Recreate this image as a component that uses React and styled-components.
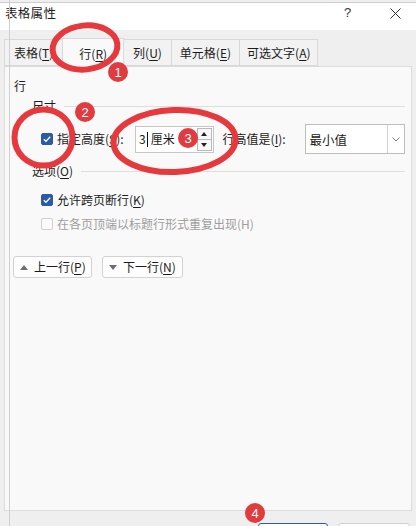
import React from "react";
import styled, { createGlobalStyle } from "styled-components";

const GlobalStyle = createGlobalStyle`
  html, body { margin: 0; padding: 0; }
  body {
    width: 416px; height: 526px; overflow: hidden;
    background: #efefef;
    font-family: "Noto Sans CJK SC", "Noto Sans", sans-serif;
    font-size: 12px; color: #1b1b1b;
  }
  u { text-decoration-thickness: 1px; text-underline-offset: 2px; }
`;

const Window = styled.div`
  position: relative;
  width: 416px; height: 526px; overflow: hidden;
  display: flex; flex-direction: column;
  background: #efefef;
`;

const TitleBar = styled.div`
  flex: none;
  margin-top: 2px;
  height: 25px;
  border-top: 1px solid #cdcdcd;
  background: #fff;
  display: flex; align-items: flex-start;
  padding: 2px 0 0 5px;
  line-height: 16px;
  font-size: 12.5px;
`;

const TitleText = styled.div`
  flex: 1;
  letter-spacing: 0.3px;
`;

const HelpMark = styled.div`
  width: 12px; margin-right: 34px;
  font-family: "Liberation Sans", sans-serif;
  font-size: 13px; color: #333;
`;

const CloseIcon = styled.svg`
  margin: 3px 15px 0 0;
`;

const Body = styled.div`
  flex: none;
  padding: 9px 4px 0 4px;
  display: flex; flex-direction: column;
`;

const TabStrip = styled.div`
  display: flex; align-items: flex-end;
  height: 27px;
  position: relative; z-index: 1;
`;

const Tab = styled.div`
  box-sizing: border-box;
  height: ${p => (p.$active ? "29px" : "27px")};
  padding: 0 ${p => p.$pad}px;
  margin: 0 -1px ${p => (p.$active ? "-1px" : "0")} 0;
  border: 1px solid #d8d8d8;
  border-bottom: ${p => (p.$active ? "none" : "1px solid #d8d8d8")};
  background: ${p => (p.$active ? "#f9f9f9" : "#f2f2f2")};
  display: flex; align-items: center;
  white-space: nowrap;
  position: relative;
  z-index: ${p => (p.$active ? 2 : 1)};
`;

const Panel = styled.div`
  box-sizing: border-box;
  height: 445px;
  border: 1px solid #dcdcdc;
  background: #f9f9f9;
  padding: 11px 6px 0 9px;
  display: flex; flex-direction: column;
`;

const Label = styled.div`
  line-height: 16px;
  white-space: nowrap;
  color: ${p => (p.$disabled ? "#9d9d9d" : "#1b1b1b")};
`;

const GroupHeader = styled.div`
  display: flex; align-items: center;
  margin: ${p => p.$mt}px 0 0 18px;
  line-height: 16px;
  &::after {
    content: "";
    flex: 1;
    height: 1px;
    background: #dedede;
    margin-left: 8px;
  }
`;

const SizeRow = styled.div`
  display: flex; align-items: center;
  margin: 11px 0 0 27px;
  height: 28px;
`;

const CheckRow = styled.div`
  display: flex; align-items: center;
  margin: ${p => p.$mt}px 0 0 27px;
  height: 16px;
`;

const Box = styled.div`
  box-sizing: border-box;
  width: 12px; height: 12px;
  border-radius: 2px;
  margin-right: 4px;
  flex: none;
  display: flex; align-items: center; justify-content: center;
  background: ${p => (p.$checked ? "#2b5aa6" : "#fbfbfb")};
  border: 1px solid ${p => (p.$checked ? "#2b5aa6" : "#cfcfcf")};
`;

const FieldLabel = styled(Label)`
  width: ${p => p.$w}px;
  margin-left: ${p => p.$ml || 0}px;
  flex: none;
`;

const SpinInput = styled.div`
  box-sizing: border-box;
  width: 82px; height: 27px;
  border: 1px solid #c6c6c6;
  background: #fff;
  display: flex; align-items: center;
  padding: 0 1px 0 3px;
`;

const InputText = styled.div`
  flex: 1;
  line-height: 16px;
  display: flex; align-items: center;
`;

const Caret = styled.span`
  display: inline-block;
  width: 1px; height: 15px;
  background: #111;
  margin: 0 3px 0 1px;
`;

const Spinner = styled.div`
  width: 15px; height: 23px;
  display: flex; flex-direction: column;
  border: 1px solid #b9b9b9;
  box-sizing: border-box;
`;

const SpinButton = styled.div`
  flex: 1;
  display: flex; align-items: center; justify-content: center;
  background: #f7f7f7;
  & + & { border-top: 1px solid #b9b9b9; }
`;

const Select = styled.div`
  box-sizing: border-box;
  width: 105px; height: 30px;
  margin-left: 9px;
  border: 1px solid #bdbdbd;
  background: #fff;
  display: flex; align-items: stretch;
`;

const SelectValue = styled.div`
  flex: 1;
  display: flex; align-items: center;
  padding-left: 4px;
  font-size: 12.5px;
`;

const SelectArrow = styled.div`
  width: 16px;
  border-left: 1px solid #d4d4d4;
  display: flex; align-items: center; justify-content: center;
`;

const NavRow = styled.div`
  display: flex; gap: 10px;
  margin: 24px 0 0 -1px;
`;

const NavButton = styled.div`
  box-sizing: border-box;
  width: ${p => p.$w}px; height: 22px;
  border: 1px solid #d2d2d2;
  border-radius: 3px;
  background: #fdfdfd;
  display: flex; align-items: center;
  padding-left: 6px;
  gap: 6px;
  white-space: nowrap;
  line-height: 16px;
  & > svg { flex: none; }
`;

const Footer = styled.div`
  flex: none;
  display: flex;
  padding: 12px 0 0 258px;
  gap: 10px;
`;

const DialogButton = styled.div`
  box-sizing: border-box;
  width: ${p => p.$w}px; height: 24px;
  border-radius: 3px;
  border: 1px solid ${p => (p.$primary ? "#2a5f9e" : "#d0d0d0")};
  background: #fdfdfd;
`;

const EdgeLine = styled.div`
  position: absolute;
  left: 9px; top: 0; bottom: 0;
  width: 1px;
  background: #cfcfcf;
  pointer-events: none;
  z-index: 5;
`;

const Annotations = styled.svg`
  position: absolute;
  left: 0; top: 0;
  pointer-events: none;
  z-index: 10;
`;

const Check = () => (
  <svg width="10" height="10" viewBox="0 0 10 10">
    <polyline points="1.8,5.2 4,7.3 8.2,2.8" fill="none" stroke="#fff" strokeWidth="1.3" />
  </svg>
);

const Tri = ({ up, color = "#6e6e6e", w = 8, h = 5 }) => (
  <svg width={w} height={h} viewBox={`0 0 ${w} ${h}`}>
    <polygon points={up ? `0,${h} ${w / 2},0 ${w},${h}` : `0,0 ${w / 2},${h} ${w},0`} fill={color} />
  </svg>
);

const Badge = ({ x, y, n }) => (
  <g>
    <circle cx={x} cy={y} r="10" fill="#e03b3e" />
    <text
      x={x} y={y + 4.5}
      textAnchor="middle"
      fontSize="13"
      fontFamily="Liberation Sans, Arial, sans-serif"
      fill="#fff"
    >{n}</text>
  </g>
);

export default function App() {
  return (
    <>
      <GlobalStyle />
      <Window>
        <TitleBar>
          <TitleText>表格属性</TitleText>
          <HelpMark>?</HelpMark>
          <CloseIcon width="11" height="11" viewBox="0 0 11 11">
            <path d="M0.5 0.5 L10.5 10.5 M10.5 0.5 L0.5 10.5" stroke="#333" strokeWidth="1" />
          </CloseIcon>
        </TitleBar>
        <Body>
          <TabStrip>
            <Tab $pad={9}>表格(<u>T</u>)</Tab>
            <Tab $pad={16} $active>行(<u>R</u>)</Tab>
            <Tab $pad={9}>列(<u>U</u>)</Tab>
            <Tab $pad={8}>单元格(<u>E</u>)</Tab>
            <Tab $pad={7}>可选文字(<u>A</u>)</Tab>
          </TabStrip>
          <Panel>
            <Label>行</Label>
            <GroupHeader $mt={4}>尺寸</GroupHeader>
            <SizeRow>
              <Box $checked><Check /></Box>
              <FieldLabel $w={78}>指定高度(<u>S</u>):</FieldLabel>
              <SpinInput>
                <InputText>3<Caret />厘米</InputText>
                <Spinner>
                  <SpinButton><Tri up color="#222" w={6} h={4} /></SpinButton>
                  <SpinButton><Tri color="#222" w={6} h={4} /></SpinButton>
                </Spinner>
              </SpinInput>
              <FieldLabel $w={73} $ml={9}>行高值是(<u>I</u>):</FieldLabel>
              <Select>
                <SelectValue>最小值</SelectValue>
                <SelectArrow>
                  <svg width="8" height="5" viewBox="0 0 8 5">
                    <polyline points="0.5,0.5 4,4 7.5,0.5" fill="none" stroke="#7a7a7a" strokeWidth="1" />
                  </svg>
                </SelectArrow>
              </Select>
            </SizeRow>
            <GroupHeader $mt={10}>选项(<u>O</u>)</GroupHeader>
            <CheckRow $mt={13}>
              <Box $checked><Check /></Box>
              <Label>允许跨页断行(<u>K</u>)</Label>
            </CheckRow>
            <CheckRow $mt={8}>
              <Box />
              <Label $disabled>在各页顶端以标题行形式重复出现(H)</Label>
            </CheckRow>
            <NavRow>
              <NavButton $w={79}><Tri up /><span>上一行(<u>P</u>)</span></NavButton>
              <NavButton $w={81}><Tri /><span>下一行(<u>N</u>)</span></NavButton>
            </NavRow>
          </Panel>
        </Body>
        <Footer>
          <DialogButton $w={70} $primary />
          <DialogButton $w={72} />
        </Footer>
        <EdgeLine />
        <Annotations width="416" height="526" viewBox="0 0 416 526">
          <g fill="none" stroke="#e5393d" strokeWidth="6">
            <ellipse cx="85" cy="47.5" rx="32.5" ry="22" transform="rotate(-6 85 47.5)" />
            <ellipse cx="43.5" cy="137.5" rx="29" ry="28" />
            <ellipse cx="174.5" cy="141" rx="61" ry="31" transform="rotate(-2 174.5 141)" />
          </g>
          <Badge x={118} y={72} n="1" />
          <Badge x={85} y={112} n="2" />
          <Badge x={188} y={138} n="3" />
          <Badge x={255} y={513} n="4" />
        </Annotations>
      </Window>
    </>
  );
}
